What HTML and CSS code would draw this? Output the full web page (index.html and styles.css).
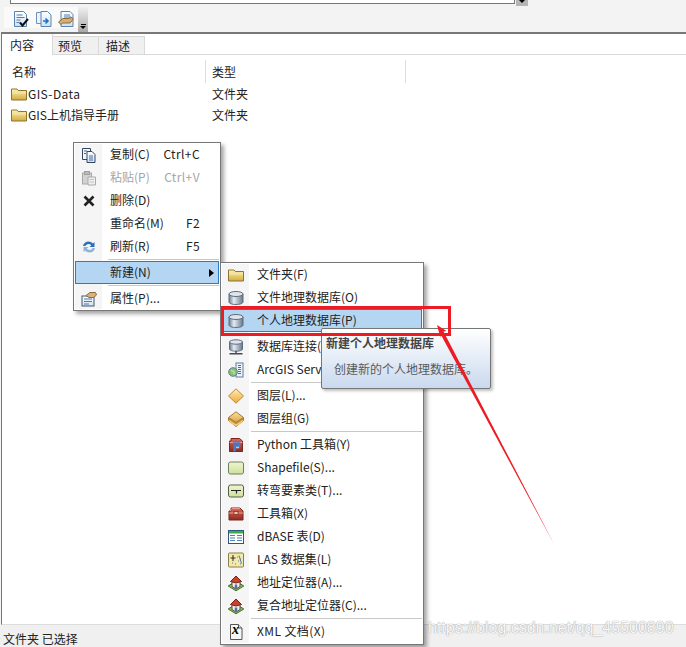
FILE: index.html
```html
<!DOCTYPE html>
<html lang="zh">
<head>
<meta charset="utf-8">
<title>ArcCatalog</title>
<link rel="stylesheet" href="styles.css">
</head>
<body>
<svg class="defs" aria-hidden="true">
  <defs>
    <linearGradient id="gFolder" x1="0" y1="0" x2="0" y2="1"><stop offset="0" stop-color="#fff3b8"/><stop offset="1" stop-color="#d2ab3f"/></linearGradient>
    <linearGradient id="gDb" x1="0" y1="0" x2="1" y2="0"><stop offset="0" stop-color="#6f7d8e"/><stop offset=".35" stop-color="#e6ebf2"/><stop offset="1" stop-color="#66788d"/></linearGradient>
    <linearGradient id="gPage" x1="0" y1="0" x2="0" y2="1"><stop offset="0" stop-color="#fff"/><stop offset="1" stop-color="#cfe0f2"/></linearGradient>
    <linearGradient id="gLayer" x1="0" y1="0" x2="0" y2="1"><stop offset="0" stop-color="#ffeeb5"/><stop offset="1" stop-color="#f0a63c"/></linearGradient>
    <linearGradient id="gStack" x1="0" y1="0" x2="0" y2="1"><stop offset="0" stop-color="#fbe3a2"/><stop offset="1" stop-color="#d8a347"/></linearGradient>
    <linearGradient id="gShape" x1="0" y1="0" x2="0" y2="1"><stop offset="0" stop-color="#eef5cf"/><stop offset="1" stop-color="#cfdf9f"/></linearGradient>
    <linearGradient id="gBox" x1="0" y1="0" x2="0" y2="1"><stop offset="0" stop-color="#d9695c"/><stop offset="1" stop-color="#8f2a22"/></linearGradient>
    <symbol id="i-folder" viewBox="0 0 16 16"><path d="M.5 3h5.500l1.200 1.500h8.300v9.500H.5z" fill="url(#gFolder)" stroke="#8d7430"/><path d="M1 7h14" stroke="#f7e9ae"/></symbol>
    <symbol id="i-db" viewBox="0 0 16 16"><path d="M1 4v8c0 1.500 3.100 2.500 7 2.500s7-1 7-2.500V4z" fill="url(#gDb)" stroke="#5f6c7c"/><ellipse cx="8" cy="4" rx="7" ry="2.500" fill="#dfe5ec" stroke="#5f6c7c"/></symbol>
    <symbol id="i-dbconn" viewBox="0 0 16 16"><path d="M1.500 3v7c0 1.300 2.900 2.200 6.500 2.200s6.500-.9 6.500-2.200V3z" fill="url(#gDb)" stroke="#5f6c7c"/><ellipse cx="8" cy="3" rx="6.500" ry="2.200" fill="#dfe5ec" stroke="#5f6c7c"/><path d="M8 12v2.800M1.500 14.800h13" stroke="#3e4a57" stroke-width="1.400"/></symbol>
    <symbol id="i-server" viewBox="0 0 16 16"><rect x="8" y="1" width="7" height="14" fill="#eef3f9" stroke="#5f7f9f"/><path d="M10 3.500h3M10 5.500h3M10 7.500h3M10 9.500h3M10 11.500h3" stroke="#3c8a3f"/><circle cx="5" cy="10" r="4.300" fill="#8ebf6a" stroke="#5a7f9c"/><path d="M3 8.500c1 1 2 0 3 1s-1 2 0 3" fill="none" stroke="#e3f0f7"/></symbol>
    <symbol id="i-layer" viewBox="0 0 16 16"><path d="M8 .8 15.500 8 8 15.200.5 8z" fill="url(#gLayer)" stroke="#bb8a35"/></symbol>
    <symbol id="i-layers" viewBox="0 0 16 16"><path d="M.5 9.500 8 15.500l7.500-6V7H.5z" fill="#c9963f" stroke="#a87a2c"/><path d="M1 9.500l7 4.500 7-4.500M1 11l7 3.500 7-3.500" fill="none" stroke="#f3d58f"/><path d="M8 .8 15.500 6.500 8 11.500.5 6.500z" fill="url(#gStack)" stroke="#a87a2c"/></symbol>
    <symbol id="i-pybox" viewBox="0 0 16 16"><path d="M3 4V1.500h8.500L14.500 4v10.500H1.500V4z" fill="url(#gBox)" stroke="#7b241d"/><path d="M1.500 5.500h13" stroke="#e99b90"/><path d="M5 6.500h6v3H6.500v5" fill="none" stroke="#3f7fc9" stroke-width="2.400"/><path d="M11 10.500h-3" stroke="#a8cdf2" stroke-width="1.600"/></symbol>
    <symbol id="i-shape" viewBox="0 0 16 16"><rect x=".5" y="2" width="15" height="12" rx="2" fill="url(#gShape)" stroke="#6f7f5a"/></symbol>
    <symbol id="i-turn" viewBox="0 0 16 16"><rect x=".5" y="2" width="15" height="12" rx="2" fill="url(#gShape)" stroke="#556344"/><path d="M3 7.500h10M8.500 7.500v3" stroke="#222" stroke-width="1.200"/></symbol>
    <symbol id="i-box" viewBox="0 0 16 16"><path d="M3 5V2h9L15 5v9H1V5z" fill="url(#gBox)" stroke="#7b241d"/><path d="M1 7h14M2 5l2-2.500h8" fill="none" stroke="#e99b90"/><rect x="6" y="5.500" width="4" height="3" fill="#e7c9a2" stroke="#7b241d" stroke-width=".7"/></symbol>
    <symbol id="i-table" viewBox="0 0 16 16"><rect x=".5" y="1.500" width="15" height="13" fill="#fff" stroke="#33567f"/><rect x="1" y="2" width="14" height="2.500" fill="#35b046"/><path d="M2 6.500h5M9 6.500h5M2 9h5M9 9h5M2 11.500h5M9 11.500h5" stroke="#4f7fb4" stroke-width="1.200"/></symbol>
    <symbol id="i-las" viewBox="0 0 16 16"><rect x=".5" y="1" width="15" height="14" rx="1" fill="#f4e9a8" stroke="#8a7f4a"/><path d="M5 3v6M2.500 6h5" stroke="#333" stroke-width="1.100"/><path d="M9 5h1M12 7h1M10 9h1M4 11h1M7 12h1M12 12h1M11 3.500l2.500 8" stroke="#4d7fa8"/></symbol>
    <symbol id="i-loc" viewBox="0 0 16 16"><path d="M8 6 15.800 11 8 15.800.2 11z" fill="#8db75a" stroke="#466f2a"/><path d="M4 6.500v5l4 2.500 4-2.500v-5L8 4z" fill="#f2efe6" stroke="#555"/><path d="M2.500 6.500 8 1l5.500 5.500L8 8z" fill="#c8432f" stroke="#7c2015"/><rect x="6.800" y="9.500" width="2.400" height="3.500" fill="#4673ad"/></symbol>
    <symbol id="i-xml" viewBox="0 0 16 16"><path d="M2.500 .5h8L14 4v11.500H2.500z" fill="#f6f6f6" stroke="#555"/><path d="M10.500 .5V4H14" fill="#ddd" stroke="#555"/></symbol>
    <symbol id="i-copy" viewBox="0 0 16 16"><path d="M1.500 1.500h8v11h-8z" fill="#f2f6fb" stroke="#36465b"/><path d="M6 4.500h5l3 3v8H6z" fill="url(#gPage)" stroke="#36465b"/><path d="M3 4h3M3 6.500h2M8 9h4M8 11h4M8 13h4" stroke="#3d70a8"/></symbol>
    <symbol id="i-paste" viewBox="0 0 16 16"><rect x="1.500" y="3" width="9" height="11" fill="#d2d2d2" stroke="#a8a8a8"/><rect x="3.500" y="1.500" width="5" height="3" fill="#bbb" stroke="#a0a0a0"/><path d="M7 7h7.500v8H7z" fill="#eee" stroke="#aaa"/><path d="M8.500 9.500h4.500M8.500 12h4.500" stroke="#c4c4c4"/></symbol>
    <symbol id="i-del" viewBox="0 0 16 16"><path d="M3.500 3.500l9 9M12.500 3.500l-9 9" stroke="#222" stroke-width="2.600"/></symbol>
    <symbol id="i-refresh" viewBox="0 0 16 16"><path d="M2 7c.5-3 3-4.500 5.500-4.500 2 0 3.500 1 4.500 2L13.500 3v5H8.500l1.800-1.800C9.500 5.500 8.500 5 7.500 5 6 5 4.800 6 4.500 7z" fill="#2f6fb4"/><path d="M14 9c-.5 3-3 4.500-5.500 4.500-2 0-3.500-1-4.500-2L2.500 13V8h5L5.700 9.800C6.500 10.500 7.500 11 8.500 11c1.500 0 2.700-1 3-2z" fill="#8fb3d8"/></symbol>
    <symbol id="i-props" viewBox="0 0 16 16"><rect x="1" y="5" width="12" height="10" fill="url(#gPage)" stroke="#46566b"/><path d="M3 8h8M3 10.500h8M3 13h5" stroke="#4d7fb4"/><path d="M5 4.500 9 1.500h5.500l1 2.500-3 2.500H8z" fill="#d9b27c" stroke="#8a6a3c"/></symbol>
    <symbol id="i-docchk" viewBox="0 0 16 16"><path d="M1.500.5h9L13.500 3.500v12h-12z" fill="url(#gPage)" stroke="#5a83ad"/><path d="M3.500 4h6M3.500 6.500h8M3.500 9h4M3.500 11.500h3" stroke="#4d7fb4"/><path d="M7 11.500l2.500 3L15 8" fill="none" stroke="#111" stroke-width="2"/></symbol>
    <symbol id="i-docarr" viewBox="0 0 16 16"><path d="M.5 1.500h7v11h-7z" fill="#edf3fa" stroke="#6f93b8"/><path d="M5 .5h6.500L15 4v11.500H5z" fill="url(#gPage)" stroke="#5a83ad"/><path d="M7 10h4M9.500 7.500 12 10l-2.500 2.500" fill="none" stroke="#1f6fc4" stroke-width="1.600"/></symbol>
    <symbol id="i-dochand" viewBox="0 0 16 16"><path d="M3 .5h9L15 3.500v12H3z" fill="url(#gPage)" stroke="#5a83ad"/><path d="M6 4h6M6 6h7" stroke="#4d7fb4"/><path d="M.5 11 5 7.500h5l4-1 1 2-3 3.500H4.500L3 13.500z" fill="#d4ae74" stroke="#8a6a3c"/></symbol>
  </defs>
</svg>

<div class="page">
  <div class="topstrip">
    <div class="addrbox"></div>
    <div class="addrbtn"><span class="addrcaret"></span></div>
  </div>

  <div class="toolbar">
    <div class="tools">
      <span class="grip"></span>
      <svg class="ticon"><use href="#i-docchk"/></svg>
      <svg class="ticon"><use href="#i-docarr"/></svg>
      <svg class="ticon"><use href="#i-dochand"/></svg>
    </div>
    <div class="overflow"><span class="ovbar"></span><span class="ovcaret"></span></div>
  </div>

  <div class="panel">
    <div class="tabs">
      <div class="tab active">内容</div>
      <div class="tab">预览</div>
      <div class="tab tab-last">描述</div>
    </div>
    <div class="list">
      <div class="listhead">
        <div class="colname headcell">名称</div>
        <div class="coltype headcell">类型</div>
      </div>
      <div class="listrow">
        <div class="colname"><svg class="ficon"><use href="#i-folder"/></svg><span class="wide">GIS-Data</span></div>
        <div class="coltype">文件夹</div>
      </div>
      <div class="listrow">
        <div class="colname"><svg class="ficon"><use href="#i-folder"/></svg>GIS上机指导手册</div>
        <div class="coltype">文件夹</div>
      </div>
    </div>
  </div>

  <div class="status">文件夹 已选择</div>
</div>

<div class="menu menu-a">
  <div class="mi"><svg class="micon"><use href="#i-copy"/></svg><span class="ml">复制(C)</span><span class="ms">Ctrl+C</span></div>
  <div class="mi disabled"><svg class="micon"><use href="#i-paste"/></svg><span class="ml">粘贴(P)</span><span class="ms">Ctrl+V</span></div>
  <div class="mi"><svg class="micon"><use href="#i-del"/></svg><span class="ml">删除(D)</span></div>
  <div class="mi"><span class="micon"></span><span class="ml">重命名(M)</span><span class="ms">F2</span></div>
  <div class="mi"><svg class="micon"><use href="#i-refresh"/></svg><span class="ml">刷新(R)</span><span class="ms">F5</span></div>
  <div class="sep"></div>
  <div class="mi hot"><span class="micon"></span><span class="ml">新建(N)</span><span class="sub"></span></div>
  <div class="sep"></div>
  <div class="mi"><svg class="micon"><use href="#i-props"/></svg><span class="ml">属性(P)...</span></div>
</div>

<div class="menu menu-b">
  <div class="mi"><svg class="micon"><use href="#i-folder"/></svg><span class="ml">文件夹(F)</span></div>
  <div class="mi"><svg class="micon"><use href="#i-db"/></svg><span class="ml">文件地理数据库(O)</span></div>
  <div class="mi hot"><svg class="micon"><use href="#i-db"/></svg><span class="ml">个人地理数据库(P)</span></div>
  <div class="sep"></div>
  <div class="mi"><svg class="micon"><use href="#i-dbconn"/></svg><span class="ml">数据库连接(D)...</span></div>
  <div class="mi"><svg class="micon"><use href="#i-server"/></svg><span class="ml">ArcGIS Server 连接(S)...</span></div>
  <div class="sep"></div>
  <div class="mi"><svg class="micon"><use href="#i-layer"/></svg><span class="ml">图层(L)...</span></div>
  <div class="mi"><svg class="micon"><use href="#i-layers"/></svg><span class="ml">图层组(G)</span></div>
  <div class="sep"></div>
  <div class="mi"><svg class="micon"><use href="#i-pybox"/></svg><span class="ml">Python 工具箱(Y)</span></div>
  <div class="mi"><svg class="micon"><use href="#i-shape"/></svg><span class="ml">Shapefile(S)...</span></div>
  <div class="mi"><svg class="micon"><use href="#i-turn"/></svg><span class="ml">转弯要素类(T)...</span></div>
  <div class="mi"><svg class="micon"><use href="#i-box"/></svg><span class="ml">工具箱(X)</span></div>
  <div class="mi"><svg class="micon"><use href="#i-table"/></svg><span class="ml">dBASE 表(D)</span></div>
  <div class="mi"><svg class="micon"><use href="#i-las"/></svg><span class="ml">LAS 数据集(L)</span></div>
  <div class="mi"><svg class="micon"><use href="#i-loc"/></svg><span class="ml">地址定位器(A)...</span></div>
  <div class="mi"><svg class="micon"><use href="#i-loc"/></svg><span class="ml">复合地址定位器(C)...</span></div>
  <div class="sep"></div>
  <div class="mi"><span class="xmlwrap"><svg class="micon"><use href="#i-xml"/></svg><span class="xmlx">x</span></span><span class="ml wide">XML 文档(X)</span></div>
</div>

<div class="tooltip">
  <div class="tiptitle">新建个人地理数据库</div>
  <div class="tipbody">创建新的个人地理数据库。</div>
</div>

<div class="redbox"></div>
<svg class="arrow" viewBox="0 0 686 647">
  <path d="M437 325 446.500 331 443.500 331.500 554.500 545 440.500 334 440.500 338z" fill="#ed1c24"/>
</svg>
<div class="watermark">https://blog.csdn.net/qq_45500890</div>
</body>
</html>
```

FILE: styles.css
```css
* { box-sizing: border-box; }
html, body { margin: 0; padding: 0; }
body {
  width: 686px;
  height: 647px;
  overflow: hidden;
  position: relative;
  font-family: "Noto Sans CJK SC", "Noto Sans", sans-serif;
  font-size: 12px;
  color: #222;
  background: #f3f3f3;
}
.defs { position: absolute; width: 0; height: 0; }
.wide { letter-spacing: .4px; }

.page { display: flex; flex-direction: column; height: 647px; }

.topstrip { display: flex; height: 7px; padding-left: 10px; align-items: flex-start; gap: 1px; flex: none; }
.addrbox { width: 505px; height: 4px; background: #fff; border: 1px solid #777; border-top: 0; }
.addrbtn { width: 12px; height: 6px; background: #b5b5b5; display: flex; justify-content: center; }
.addrcaret { width: 0; height: 0; border: 3px solid transparent; border-top-color: #000; border-bottom: 0; }

.toolbar { display: flex; height: 25px; padding-left: 4px; flex: none; }
.tools { display: flex; align-items: center; height: 21px; width: 74px; background: #fafafa; padding: 3px 0 0 3px; }
.grip { width: 2px; height: 15px; margin-right: 6px; background: repeating-linear-gradient(#b4b4b4 0 2px, transparent 2px 4px); }
.ticon { width: 16px; height: 16px; margin-right: 6.500px; flex: none; }
.overflow {
  width: 10px; height: 25px; display: flex; flex-direction: column; align-items: center; justify-content: flex-end;
  padding-bottom: 3px; gap: 1px;
  background: linear-gradient(#f0f0f0, #a9a9a9);
}
.ovbar { width: 5px; height: 1px; background: #000; }
.ovcaret { width: 0; height: 0; border: 3px solid transparent; border-top-color: #000; border-bottom: 0; }

.panel { flex: none; height: 593px; margin-left: 1px; background: #fff; border-top: 2px solid #777; border-left: 1px solid #777; border-bottom: 1px solid #ddd; }
.tabs { display: flex; height: 21px; border-bottom: 1px solid #d9d9d9; align-items: flex-end; }
.tab { width: 46px; height: 19px; margin-bottom: -1px; line-height: 18px; padding-left: 5px; background: #f0f0f0; border: 1px solid #d9d9d9; border-left: 0; }
.tab-last { padding-left: 7px; }
.tab.active { width: 51px; height: 21px; padding-left: 8px; background: #fff; border-top: 0; border-bottom: 0; line-height: 21px; }

.list { padding-top: 5px; }
.listhead { display: flex; height: 23px; }
.listrow { display: flex; height: 21px; align-items: center; }
.colname { width: 204px; padding-left: 9px; display: flex; align-items: center; white-space: nowrap; }
.coltype { width: 200px; padding-left: 6px; white-space: nowrap; }
.headcell { height: 23px; padding-bottom: 1px; border-right: 1px solid #ddd; }
.colname.headcell { padding-left: 10px; }
.coltype.headcell { display: flex; align-items: center; }
.ficon { width: 16px; height: 16px; margin-right: 1px; flex: none; }

.status { flex: 1; background: #f0f0f0; padding: 6px 0 0 3px; line-height: 16px; }

.menu {
  position: absolute;
  background: #fff;
  border: 1px solid #777;
  padding: 0 1px;
  box-shadow: 3px 3px 4px rgba(0, 0, 0, .35);
  white-space: nowrap;
}
.menu::before { content: ""; position: absolute; left: 1px; top: 1px; bottom: 1px; background: #f5f5f5; }
.menu-a { left: 73px; top: 142px; width: 148px; height: 169px; }
.menu-a::before { width: 27px; }
.menu-b { left: 220px; top: 262px; width: 204px; height: 383px; }
.menu-b::before { width: 27px; }

.mi { position: relative; display: flex; align-items: center; height: 23px; padding-left: 5px; border: 1px solid transparent; }
.mi.disabled { color: #a6a6a6; }
.mi.hot { background: #b5d6f2; border-color: #2a7ec0; }
.micon { width: 16px; height: 16px; flex: none; display: block; }
.ml { margin: 0 0 2px 13px; }
.ms { margin: 0 18px 2px auto; letter-spacing: .4px; }
.sub { margin-left: auto; margin-right: 4px; width: 0; height: 0; border: 4px solid transparent; border-left: 5px solid #000; border-right: 0; }
.sep { position: relative; height: 3px; padding-top: 1px; margin-left: 29px; }
.sep::after { content: ""; display: block; height: 1px; background: #c8c8c8; }
.menu-a .sep { margin-left: 33px; }
.xmlwrap { position: relative; display: block; flex: none; }
.xmlx { position: absolute; left: 4px; top: -2px; font: italic bold 14px "Liberation Serif", serif; color: #000; }

.tooltip {
  position: absolute; left: 321px; top: 328px; width: 170px; height: 61px;
  border: 1px solid #767676; border-radius: 2px;
  background: linear-gradient(#fff, #c9d9ee);
  box-shadow: 2px 2px 3px rgba(0, 0, 0, .25);
  color: #4c4c4c;
  white-space: nowrap;
  padding: 6px 0 0 4px;
}
.tiptitle { font-weight: 700; color: #444; line-height: 16px; }
.tipbody { margin: 10px 0 0 8px; line-height: 16px; color: #5a5a5a; }

.redbox { position: absolute; left: 221px; top: 306px; width: 230px; height: 30px; border: 3px solid #ed1c24; }
.arrow { position: absolute; left: 0; top: 0; width: 686px; height: 647px; pointer-events: none; }
.watermark {
  position: absolute; left: 428px; top: 619px;
  font: 16px/18px "Liberation Sans", sans-serif;
  color: #f7f7f7;
  text-shadow: 0 0 1px #aaa, 0 0 1px #aaa;
  white-space: nowrap;
}
```
